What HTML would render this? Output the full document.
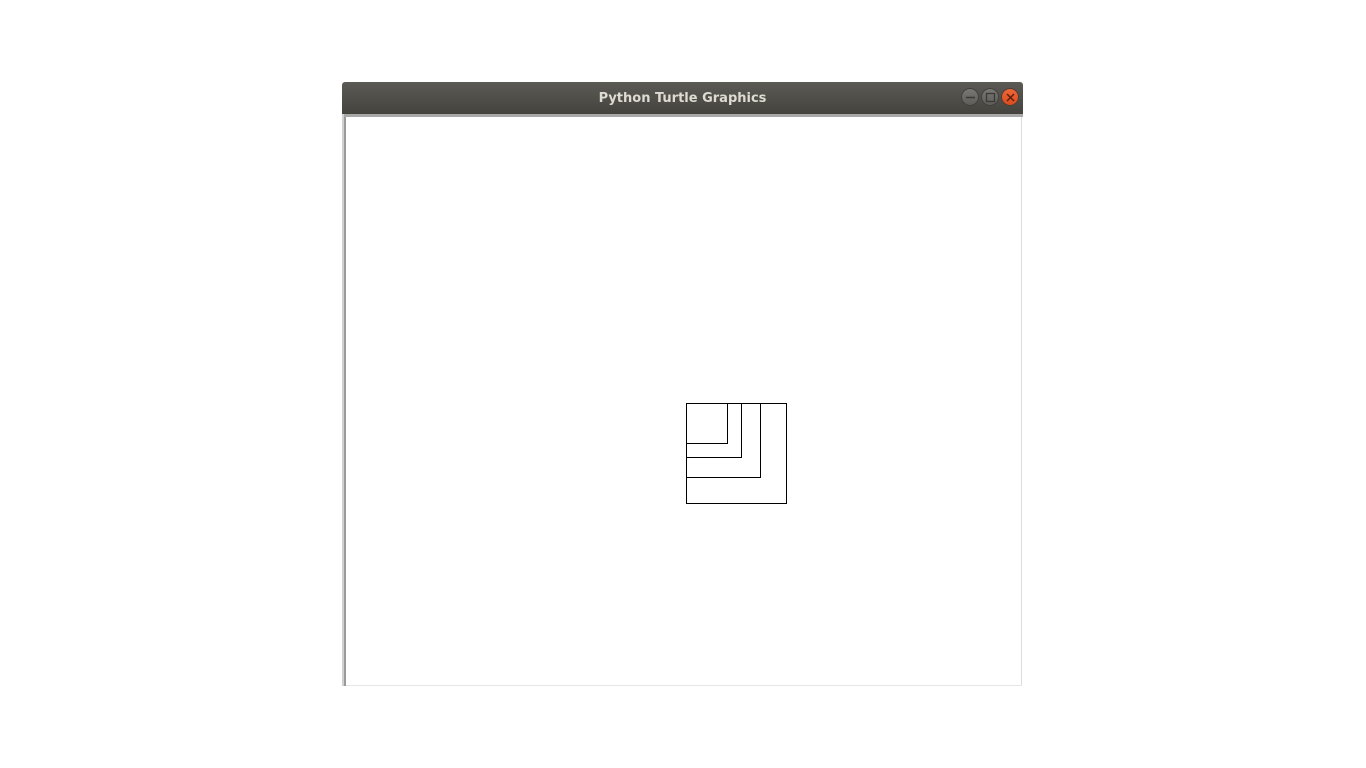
<!DOCTYPE html>
<html><head><meta charset="utf-8"><style>
html,body{margin:0;padding:0;background:#fff;width:1366px;height:768px;overflow:hidden;position:relative}
.tb{position:absolute;left:342px;top:82px;width:681px;height:32px;background:linear-gradient(#5b5a55,#44433e);border-radius:3px 3px 0 0}
.tb .t{position:absolute;left:0;right:0;top:9px;text-align:center;color:#dfdbd2;font:bold 13px "DejaVu Sans","Liberation Sans",sans-serif}
.b{position:absolute;top:88px;width:18px;height:18px;border-radius:50%;background:linear-gradient(#7a7975,#5c5b57);box-shadow:inset 0 0 0 1px #3f3e3a}
.cl{background:linear-gradient(#f0683a,#d84a1b)}
.frame{position:absolute;left:342px;top:114px;width:681px;height:572px;background:#fff}
.top{position:absolute;left:342px;top:114px;width:681px;height:3px;background:#a8a8a8}
.lft{position:absolute;left:342px;top:114px;width:2px;height:572px;background:#d0d0d0}
.lft2{position:absolute;left:344px;top:117px;width:2px;height:569px;background:#9a9a9a}
.rgt{position:absolute;left:1021px;top:117px;width:1px;height:569px;background:#dcdcdc}
.bot{position:absolute;left:346px;top:685px;width:676px;height:1px;background:#e6e6e6}
</style></head><body>
<div class="frame"></div>
<div class="tb"><div class="t">Python Turtle Graphics</div></div>
<div class="b" style="left:961px"></div>
<div class="b" style="left:981px"></div>
<div class="b cl" style="left:1001px"></div>
<svg style="position:absolute;left:0;top:0" width="1366" height="768">
<line x1="966" y1="97.5" x2="975" y2="97.5" stroke="#3a3935" stroke-width="1.5"/>
<rect x="986.5" y="93.5" width="8" height="8" fill="none" stroke="#3a3935" stroke-width="1.3"/>
<path d="M1007 94 L1014 101 M1014 94 L1007 101" stroke="#5a2010" stroke-width="1.5"/>
<g fill="none" stroke="#000" stroke-width="1" shape-rendering="crispEdges">
<rect x="686.5" y="403.5" width="100" height="100"/>
<path d="M686.5 477.5 H760.5 V403.5"/>
<path d="M686.5 457.5 H741.5 V403.5"/>
<path d="M686.5 443.5 H727.5 V403.5"/>
</g>
</svg>
<div class="top"></div><div class="lft"></div><div class="lft2"></div><div class="rgt"></div><div class="bot"></div>
</body></html>
